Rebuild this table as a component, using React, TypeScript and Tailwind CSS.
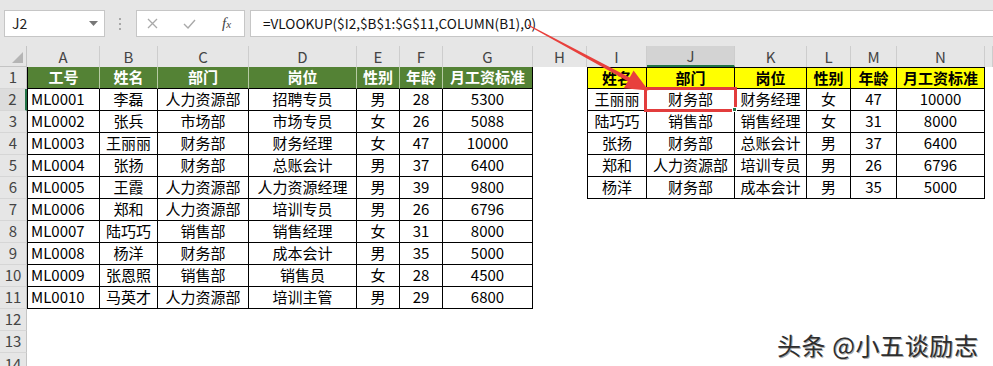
import clsx from "clsx";

const colLetters = ["A", "B", "C", "D", "E", "F", "G", "H", "I", "J", "K", "L", "M", "N", ""];

const leftRows = [
  ["工号", "姓名", "部门", "岗位", "性别", "年龄", "月工资标准"],
  ["ML0001", "李磊", "人力资源部", "招聘专员", "男", "28", "5300"],
  ["ML0002", "张兵", "市场部", "市场专员", "女", "26", "5088"],
  ["ML0003", "王丽丽", "财务部", "财务经理", "女", "47", "10000"],
  ["ML0004", "张扬", "财务部", "总账会计", "男", "37", "6400"],
  ["ML0005", "王霞", "人力资源部", "人力资源经理", "男", "39", "9800"],
  ["ML0006", "郑和", "人力资源部", "培训专员", "男", "26", "6796"],
  ["ML0007", "陆巧巧", "销售部", "销售经理", "女", "31", "8000"],
  ["ML0008", "杨洋", "财务部", "成本会计", "男", "35", "5000"],
  ["ML0009", "张恩照", "销售部", "销售员", "女", "28", "4500"],
  ["ML0010", "马英才", "人力资源部", "培训主管", "男", "29", "6800"],
];

const rightRows = [
  ["姓名", "部门", "岗位", "性别", "年龄", "月工资标准"],
  ["王丽丽", "财务部", "财务经理", "女", "47", "10000"],
  ["陆巧巧", "销售部", "销售经理", "女", "31", "8000"],
  ["张扬", "财务部", "总账会计", "男", "37", "6400"],
  ["郑和", "人力资源部", "培训专员", "男", "26", "6796"],
  ["杨洋", "财务部", "成本会计", "男", "35", "5000"],
];

function FormulaBar() {
  return (
    <div className="flex h-[46px] items-start bg-[#e6e6e6] pt-[10px]">
      <div className="ml-[4px] flex h-[27px] w-[101px] items-center justify-between border border-[#c6c6c6] bg-white pl-[7px] pr-[6px] text-[14px] text-[#222]">
        <span>J2</span>
        <svg width="9" height="5" viewBox="0 0 9 5">
          <path d="M0 0h9L4.5 5z" fill="#777" />
        </svg>
      </div>
      <div className="ml-[13px] flex h-[27px] w-[4px] flex-col items-center justify-center gap-[3px]">
        <span className="h-[2px] w-[2px] bg-[#a8a8a8]" />
        <span className="h-[2px] w-[2px] bg-[#a8a8a8]" />
        <span className="h-[2px] w-[2px] bg-[#a8a8a8]" />
      </div>
      <div className="ml-[14px] flex h-[27px] w-[109px] items-center border border-[#c6c6c6] bg-white">
        <svg className="ml-[10px]" width="11" height="11" viewBox="0 0 11 11">
          <path d="M1 1l9 9M10 1l-9 9" stroke="#a9a9a9" strokeWidth="1.3" fill="none" />
        </svg>
        <svg className="ml-[25px]" width="13" height="10" viewBox="0 0 13 10">
          <path d="M1 5l4 4 7-8" stroke="#a9a9a9" strokeWidth="1.4" fill="none" />
        </svg>
        <span className="ml-[26px] font-['Liberation_Serif',serif] text-[15px] italic text-[#444]">
          f<span className="text-[11px]">x</span>
        </span>
      </div>
      <div className="ml-[5px] flex h-[27px] flex-1 items-center border border-r-0 border-[#c6c6c6] bg-white pl-[12px] text-[13.6px] text-[#111]">
        =VLOOKUP($I2,$B$1:$G$11,COLUMN(B1),0)
      </div>
    </div>
  );
}

function Corner() {
  return (
    <div className="relative border-r border-b border-[#c4c4c4] bg-[#e6e6e6]">
      <svg className="absolute right-[3px] bottom-[3px]" width="11" height="11" viewBox="0 0 11 11">
        <path d="M11 0v11H0z" fill="#b5b5b5" />
      </svg>
    </div>
  );
}

function ColHeader({ letter, index }: { letter: string; index: number }) {
  const active = index === 9;
  return (
    <div
      className={clsx(
        "flex items-center justify-center border-r border-[#cdcdcd] pt-[2px] text-[15px] text-[#444]",
        active ? "border-b-2 border-b-[#217346] bg-[#d3d3d3]" : "bg-[#e6e6e6]"
      )}
    >
      {letter}
    </div>
  );
}

function RowHeader({ r }: { r: number }) {
  return (
    <div
      className={clsx(
        "flex justify-center border-b border-[#d6d6d6] text-[15px] text-[#444]",
        r === 14 ? "items-start" : "items-center",
        r === 2 ? "border-r-2 border-r-[#217346] bg-[#dcdcdc]" : "border-r border-r-[#c4c4c4] bg-[#e6e6e6]"
      )}
    >
      {r}
    </div>
  );
}

function Cell({ r, c }: { r: number; c: number }) {
  const inLeft = c >= 1 && c <= 7 && r <= 11;
  const inRight = c >= 9 && c <= 14 && r <= 6;

  if (!inLeft && !inRight) return <div className="bg-white" />;

  if (inLeft) {
    const text = leftRows[r - 1][c - 1];
    if (r === 1) {
      return (
        <div
          className={clsx(
            "flex items-center justify-center border-b border-b-black bg-[#548235] text-[15px] font-bold text-white",
            c === 7 ? "border-r border-r-black" : "border-r border-r-[#b7cba4]",
            c === 1 && "border-l border-l-black"
          )}
        >
          {text}
        </div>
      );
    }
    return (
      <div
        className={clsx(
          "flex items-center border-r border-b border-black bg-white text-[15px] text-black",
          c === 1 ? "justify-start border-l pl-[3px]" : "justify-center"
        )}
      >
        {text}
      </div>
    );
  }

  const text = rightRows[r - 1][c - 9];
  const selected = r === 2 && c === 10;
  return (
    <div
      className={clsx(
        "relative flex items-center justify-center border-r border-b border-black text-[15px] text-black",
        r === 1 ? "border-t bg-[#ffff00] font-bold" : "bg-white",
        c === 9 && "border-l"
      )}
    >
      {text}
      {selected && (
        <div className="absolute -top-[2px] -right-[3px] -bottom-[2px] -left-[3px] z-10 border-[3px] border-[#e23c3c]">
          <span className="absolute -right-[3px] -bottom-[3px] h-[5px] w-[5px] border border-white bg-[#217346]" />
        </div>
      )}
    </div>
  );
}

function Arrow() {
  return (
    <svg className="pointer-events-none absolute inset-0 z-20" width="993" height="366" viewBox="0 0 993 366">
      <polygon
        points="528.2,24.4 629.7,77.4 633.6,70.6 648.5,90.5 623.8,88.2 627.9,81.3 527.8,25.6"
        fill="#e8403c"
      />
    </svg>
  );
}

export default function App() {
  const rows = Array.from({ length: 14 }, (_, i) => i + 1);
  return (
    <div className="relative h-[366px] w-[993px] overflow-hidden bg-white font-['Noto_Sans_CJK_SC',sans-serif]">
      <FormulaBar />
      <div className="grid grid-cols-[27px_73px_58px_91px_108px_43px_43px_90px_54px_60px_88px_72px_44px_46px_88px_1fr] grid-rows-[21px_repeat(14,22px)]">
        <Corner />
        {colLetters.map((l, i) => (
          <ColHeader key={i} letter={l} index={i} />
        ))}
        {rows.map((r) => (
          <div key={r} className="contents">
            <RowHeader r={r} />
            {colLetters.map((_, ci) => (
              <Cell key={ci} r={r} c={ci + 1} />
            ))}
          </div>
        ))}
      </div>
      <Arrow />
      <div className="absolute top-[327px] left-[777px] z-20 text-[24px] tracking-[0.6px] text-[#2e2e2e] [text-shadow:1px_1px_0_#aaa]">
        头条 @小五谈励志
      </div>
    </div>
  );
}
